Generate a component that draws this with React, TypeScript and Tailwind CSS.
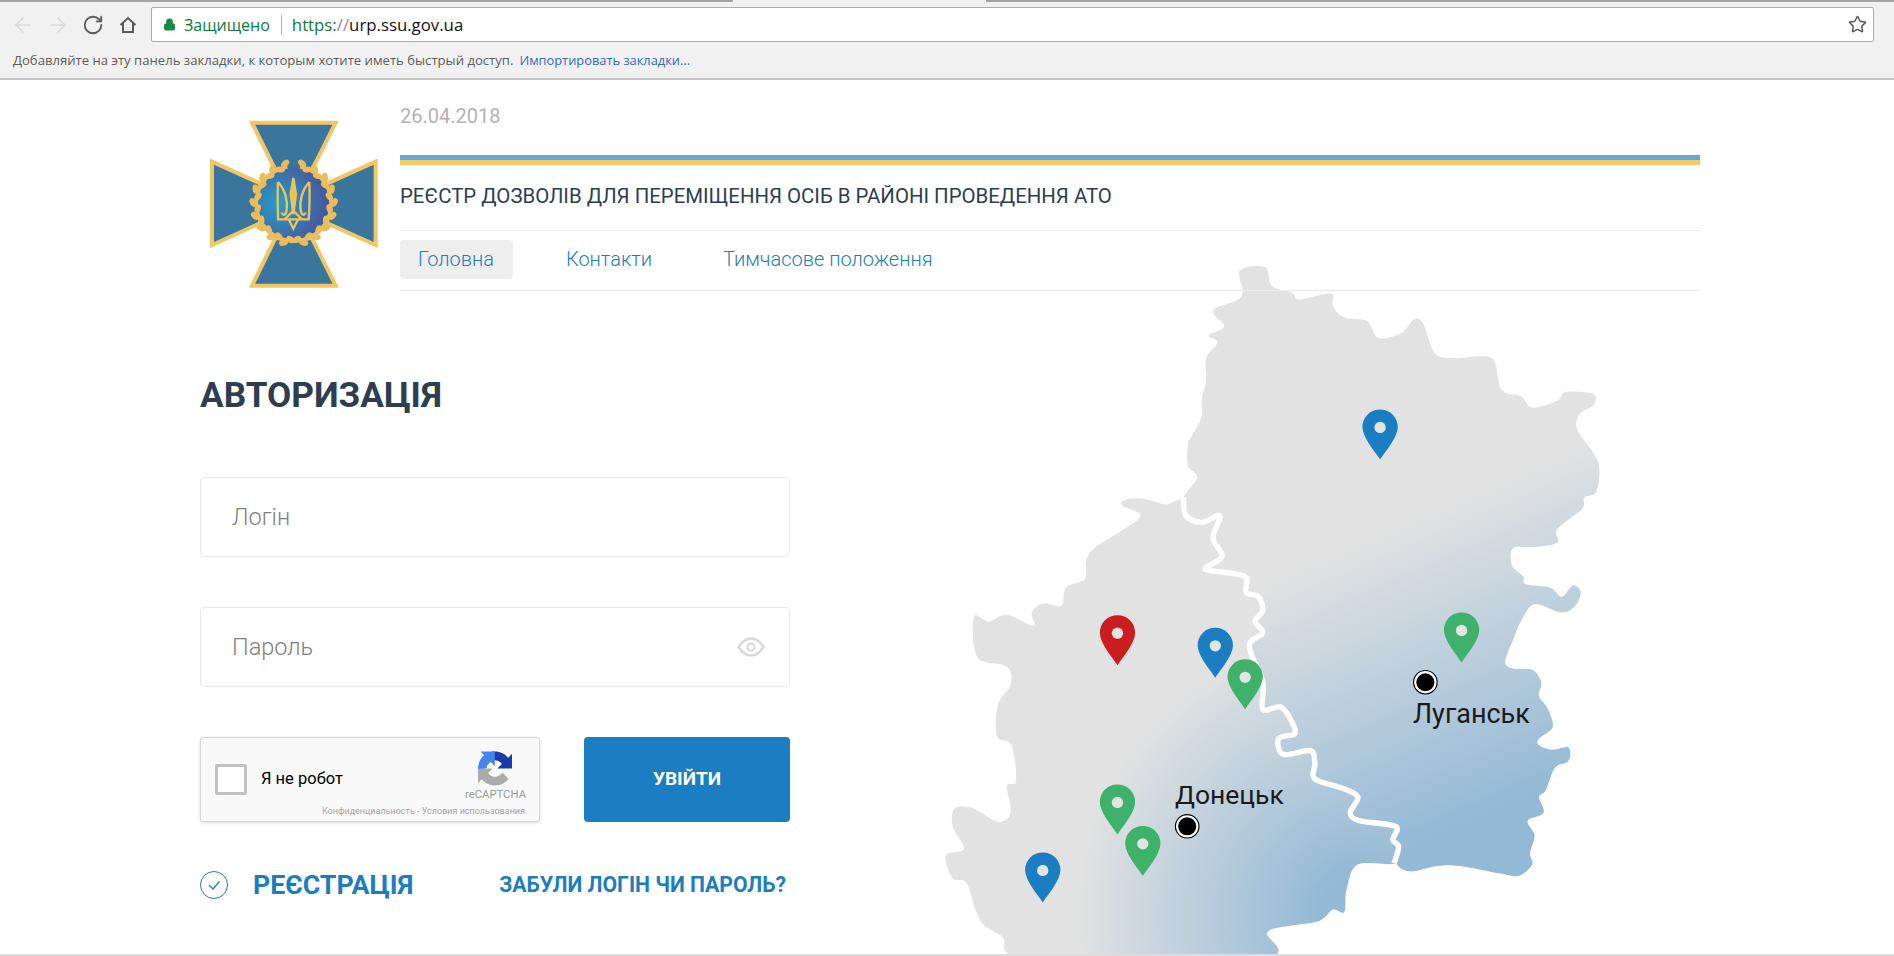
import React from 'react';
import { ArrowLeft, ArrowRight, RotateCw, Lock, Star } from 'lucide-react';

// map traced in its own 1568 unit box
const luhanskPoints =
  '685,45 740,38 755,80 800,95 815,110 885,97 890,125 915,150 965,158 990,195 1040,185 1070,153 1090,165 1115,230 1160,240 1240,240 1262,310 1305,325 1330,350 1385,335 1405,315 1465,320 1465,345 1435,365 1430,400 1475,470 1472,535 1445,550 1440,575 1385,620 1385,650 1330,660 1288,662 1285,700 1310,725 1315,742 1370,750 1395,770 1420,745 1437,760 1425,790 1395,805 1335,787 1305,825 1290,860 1270,915 1290,930 1330,932 1350,960 1345,990 1365,1020 1375,1060 1345,1085 1345,1100 1375,1110 1410,1105 1410,1135 1380,1150 1360,1200 1345,1215 1355,1250 1320,1268 1335,1300 1325,1340 1330,1365 1300,1390 1260,1385 1170,1368 1120,1368 1060,1380 1030,1362 1035,1325 1022,1310 1028,1280 950,1268 928,1250 945,1215 910,1195 850,1175 850,1140 840,1112 780,1120 770,1085 805,1075 800,1050 775,1015 735,1020 735,960 705,880 735,850 718,825 735,800 725,770 698,760 695,725 620,712 610,705 645,680 625,640 640,590 600,605 565,590 560,550 590,505 570,480 570,430 580,410 600,370 600,330 610,290 610,240 635,205 615,190 650,170 625,135 680,110 690,90';
const donetskPoints =
  '555,555 520,565 470,552 430,555 425,568 465,590 420,625 365,660 345,690 342,730 300,750 290,790 250,785 225,805 228,835 170,810 130,825 97,815 105,905 170,925 178,965 150,1010 148,1080 180,1100 190,1180 170,1190 178,1250 150,1270 95,1240 55,1240 50,1280 75,1330 35,1345 50,1395 80,1405 100,1465 120,1500 160,1525 225,1575 730,1575 745,1515 800,1500 860,1490 890,1465 915,1470 920,1420 945,1365 1030,1362 1035,1325 1022,1310 1028,1280 950,1268 928,1250 945,1215 910,1195 850,1175 850,1140 840,1112 780,1120 770,1085 805,1075 800,1050 775,1015 735,1020 735,960 705,880 735,850 718,825 735,800 725,770 698,760 695,725 620,712 610,705 645,680 625,640 640,590 600,605 565,590';
const borderPoints =
  '560,550 565,590 600,605 640,590 625,640 645,680 610,705 620,712 695,725 698,760 725,770 735,800 718,825 735,850 705,880 735,960 735,1020 775,1015 800,1050 805,1075 770,1085 780,1120 840,1112 850,1140 850,1175 910,1195 945,1215 928,1250 950,1268 1028,1280 1022,1310 1035,1325 1025,1362';

// catmull-rom through the traced points, so the outline isn't all corners
const smoothPath = (points: string, closed: boolean) => {
  const pts = points.split(' ').map((p) => p.split(',').map(Number));
  const at = (i: number) =>
    closed ? pts[(i + pts.length) % pts.length] : pts[Math.max(0, Math.min(pts.length - 1, i))];
  const end = closed ? pts.length : pts.length - 1;
  let d = `M${pts[0][0]} ${pts[0][1]}`;
  for (let i = 0; i < end; i++) {
    const [p0, p1, p2, p3] = [at(i - 1), at(i), at(i + 1), at(i + 2)];
    d += ` C${p1[0] + (p2[0] - p0[0]) / 6} ${p1[1] + (p2[1] - p0[1]) / 6} ${p2[0] - (p3[0] - p1[0]) / 6} ${p2[1] - (p3[1] - p1[1]) / 6} ${p2[0]} ${p2[1]}`;
  }
  return closed ? d + ' Z' : d;
};

const pins = [
  { x: 994, y: 465, color: '#1b7dc2' },
  { x: 414, y: 922, color: '#cb1c1f' },
  { x: 630, y: 950, color: '#1b7dc2' },
  { x: 696, y: 1020, color: '#3eb26a' },
  { x: 1174, y: 916, color: '#3eb26a' },
  { x: 414, y: 1298, color: '#3eb26a' },
  { x: 470, y: 1390, color: '#3eb26a' },
  { x: 249, y: 1449, color: '#1b7dc2' },
];

const RegionMap = () => (
  <svg viewBox="0 0 1568 1568" preserveAspectRatio="none" className="w-[710px] h-[706px] block">
    <defs>
      <linearGradient id="lug" gradientUnits="userSpaceOnUse" x1="1000" y1="620" x2="1270" y2="1240">
        <stop offset="0" stopColor="#e2e2e2" />
        <stop offset="1" stopColor="#93b9d6" />
      </linearGradient>
      <radialGradient id="don" gradientUnits="userSpaceOnUse" cx="960" cy="1480" r="640">
        <stop offset="0.15" stopColor="#93b9d6" />
        <stop offset="1" stopColor="#e2e2e2" />
      </radialGradient>
    </defs>
    <path d={smoothPath(donetskPoints, true)} fill="url(#don)" />
    <path d={smoothPath(luhanskPoints, true)} fill="url(#lug)" />
    <path d={smoothPath(borderPoints, false)} fill="none" stroke="#fff" strokeWidth="12" strokeLinejoin="round" />
    {pins.map((p, i) => (
      <g key={i} transform={`translate(${p.x} ${p.y})`}>
        <path d="M0 0 C-15 -22 -39 -50 -39 -72 A39 39 0 0 1 39 -72 C39 -50 15 -22 0 0Z" fill={p.color} />
        <circle cx="0" cy="-71" r="12.5" fill="#e4e4e4" />
      </g>
    ))}
    <circle cx="1094" cy="960" r="26" fill="#fff" stroke="#000" strokeWidth="2.5" />
    <circle cx="1094" cy="960" r="20" fill="#000" />
    <circle cx="568" cy="1280" r="26" fill="#fff" stroke="#000" strokeWidth="2.5" />
    <circle cx="568" cy="1280" r="20" fill="#000" />
  </svg>
);

const SsuEmblem = () => (
  <svg viewBox="60 90 504 504" className="w-[168px] h-[168px] shrink-0">
    <defs>
      <radialGradient id="emb" cx="0.3" cy="0.5" r="0.8">
        <stop offset="0" stopColor="#279fc9" />
        <stop offset="1" stopColor="#4f4792" />
      </radialGradient>
    </defs>
    <g fill="#3a759d" stroke="#f3c664" strokeWidth="12">
      <path d="M186 98 L437 98 L366 240 L256 240 Z" />
      <path d="M186 587 L437 587 L366 445 L256 445 Z" />
      <path d="M66 215 L66 465 L210 400 L210 280 Z" />
      <path d="M557 215 L557 465 L412 400 L412 280 Z" />
    </g>
    <circle cx="311" cy="340" r="108" fill="url(#emb)" />
    <path d="M292 231 A112 112 0 1 0 330 231" fill="none" stroke="#e9bd5c" strokeWidth="10" />
    {Array.from({ length: 36 }).map((_, i) => {
      // leaves run from the top round to the bottom on each side
      const side = i % 2 === 0 ? 1 : -1;
      const deg = 12 + Math.floor(i / 2) * 9.6;
      const a = (deg * Math.PI) / 180;
      const r = 113 + (i % 4 < 2 ? 9 : -4);
      const x = 311 + side * r * Math.sin(a);
      const y = 340 - r * Math.cos(a);
      const rot = side * (deg + (i % 4 < 2 ? 30 : -25));
      return <ellipse key={i} cx={x} cy={y} rx="14" ry="9" fill="#e9bd5c" transform={`rotate(${rot} ${x} ${y})`} />;
    })}
    <g fill="none" stroke="#efc35a" strokeWidth="7">
      <path d="M310 264 L302 312 L310 372 L318 312 Z" fill="#efc35a" />
      <path d="M264 276 C262 320 264 360 264 388 L356 388 C358 360 360 320 358 276" />
      <path d="M264 276 C286 300 294 335 290 360 C288 376 279 378 275 368" />
      <path d="M358 276 C336 300 328 335 332 360 C334 376 343 378 347 368" />
      <path d="M284 388 L310 362 L336 388 M296 388 L310 416 L324 388" />
    </g>
  </svg>
);

const RecaptchaLogo = () => (
  <svg viewBox="0 0 64 64" className="w-[34px] h-[35px]">
    <path d="M64 31.955l-.033-1.37V4.687l-7.16 7.16C50.948 4.674 42.033.093 32.05.093c-10.4 0-19.622 4.96-25.458 12.64l11.736 11.86c1.15-2.127 2.784-3.955 4.75-5.33 2.05-1.6 4.953-2.91 8.97-2.91.486 0 .86.057 1.135.163 4.976.393 9.288 3.14 11.828 7.124l-8.307 8.307c10.522-.04 22.4-.066 27.295.002" fill="#1c3aa9" />
    <path d="M31.862.094l-1.37.033H4.594l7.16 7.16C4.58 13.147 0 22.06 0 32.045c0 1.2.066 2.4.2 3.5L16.2 31c.393-4.976 3.14-9.288 7.124-11.828l8.307 8.307c-.04-10.522-.066-22.4.002-27.295" fill="#4285f4" />
    <path d="M.001 32.045l.033 1.37v25.898l7.16-7.16c5.86 7.173 14.774 11.754 24.76 11.754 10.4 0 19.622-4.96 25.458-12.64l-11.736-11.86c-1.15 2.127-2.784 3.955-4.75 5.33-2.05 1.6-4.953 2.91-8.97 2.91-.486 0-.86-.057-1.135-.163-4.976-.393-9.288-3.14-11.828-7.124l8.307-8.307C21.778 31.983 9.9 32.01 5.006 31.942" fill="#ababab" />
  </svg>
);

const BrowserBar = () => (
  <div className="h-[80px] bg-[#f1f1f1] border-b-2 border-[#c4c4c4] shrink-0 flex flex-col font-['Open_Sans',sans-serif]">
    <div className="flex h-[2px] shrink-0">
      <div className="w-[733px] bg-[#a3a3a3]" />
      <div className="w-[253px]" />
      <div className="flex-1 bg-[#a3a3a3]" />
    </div>
    <div className="flex items-center h-[35px] mt-[5px] pl-[11px] pr-[20px]">
      <ArrowLeft className="w-[24px] h-[24px] text-[#d9d9d9] mr-[11px]" strokeWidth={1.5} />
      <ArrowRight className="w-[24px] h-[24px] text-[#d9d9d9] mr-[12px]" strokeWidth={1.5} />
      <RotateCw className="w-[22px] h-[22px] text-[#5a5a5a] mr-[15px]" strokeWidth={2} />
      <svg viewBox="0 0 18 18" className="w-[18px] h-[18px] mr-[14px]" fill="none" stroke="#5a5a5a" strokeWidth="2">
        <path d="M1.5 9 L9 2 L16.5 9 M4 7.5 L4 16 L14 16 L14 7.5" />
      </svg>
      <div className="flex-1 h-[35px] bg-white border border-[#ababab] rounded-[2px] flex items-center pl-[11px] pr-[6px] text-[16px]">
        <Lock className="w-[13px] h-[15px] text-[#178a3e] fill-[#178a3e]" />
        <span className="ml-[8px] text-[#0b7a3b]">Защищено</span>
        <span className="w-px h-[20px] bg-[#b5b5b5] ml-[11px] mr-[10px]" />
        <span className="text-[16.8px] text-[#0b7a3b]">https:</span>
        <span className="text-[16.8px] text-[#8a8a8a]">//</span>
        <span className="text-[16.8px] text-[#111]">urp.ssu.gov.ua</span>
        <Star className="ml-auto w-[19px] h-[19px] text-[#555]" strokeWidth={1.8} />
      </div>
    </div>
    <div className="flex items-center pl-[13px] mt-[3px] text-[13px] leading-[16px] h-[30px]">
      <span className="text-[13.12px] text-[#5c5c5c]">Добавляйте на эту панель закладки, к которым хотите иметь быстрый доступ.</span>
      <span className="text-[12.85px] text-[#3367d6] ml-[6px]">Импортировать закладки...</span>
    </div>
  </div>
);

const SiteHeader = () => (
  <div className="flex">
    <div className="pl-[10px] pt-[39px] w-[200px] shrink-0">
      <SsuEmblem />
    </div>
    <div className="w-[1300px] pt-[23px]">
      <p className="text-[20px] leading-[24px] text-[#b3b3b3]">26.04.2018</p>
      <div className="mt-[27px] h-[5px] bg-[#66a9d9]" />
      <div className="h-[5px] bg-[#f5c964]" />
      <h2 className="mt-[19px] mb-[22px] text-[20.4px] leading-[24px] text-[#2c3e50]">
        РЕЄСТР ДОЗВОЛІВ ДЛЯ ПЕРЕМІЩЕННЯ ОСІБ В РАЙОНІ ПРОВЕДЕННЯ АТО
      </h2>
      <nav className="border-y border-[#ebebeb] pt-[8px] pb-[11px] flex items-center h-[61px] font-light text-[20px] text-[#1b7dc2]">
        <a className="bg-[#eeeeee] rounded-[4px] h-[39px] pl-[18px] pr-[19px] flex items-center">Головна</a>
        <a className="ml-[53px]">Контакти</a>
        <a className="ml-[71px]">Тимчасове положення</a>
      </nav>
    </div>
  </div>
);

const LoginForm = () => (
  <div className="w-[590px]">
    <h1 className="mt-[82px] text-[35.2px] leading-[44px] font-bold text-[#2c3e50]">АВТОРИЗАЦІЯ</h1>
    <div className="mt-[60px] h-[80px] pt-[2px] border border-[#e8e8e8] rounded-[4px] flex items-center pl-[31px] font-light text-[23.5px] text-[#808080]">
      Логін
    </div>
    <div className="mt-[50px] h-[80px] pt-[2px] border border-[#e8e8e8] rounded-[4px] flex items-center justify-between pl-[31px] pr-[24px] font-light text-[23.5px] text-[#808080]">
      Пароль
      <svg viewBox="0 0 28 20" className="w-[28px] h-[20px] -mt-[2px]" fill="none" stroke="#d9d9d9" strokeWidth="2.5">
        <path d="M1.5 10 C6 3 10 1.5 14 1.5 C18 1.5 22 3 26.5 10 C22 17 18 18.5 14 18.5 C10 18.5 6 17 1.5 10Z" />
        <circle cx="14" cy="10" r="3.5" strokeWidth="2" />
      </svg>
    </div>
    <div className="mt-[50px] flex justify-between">
      <div className="w-[340px] h-[85px] bg-[#f9f9f9] border border-[#d6d6d6] rounded-[3px] shadow-[0_1px_3px_rgba(0,0,0,0.15)] flex flex-col">
        <div className="flex justify-between h-[64px]">
          <div className="flex items-center pl-[14px] pt-[14px] h-[54px] box-content">
            <div className="w-[32px] h-[31px] shrink-0 bg-white border-[3px] border-[#c1c1c1] rounded-[2px]" />
            <span className="ml-[14px] text-[16.5px] text-black whitespace-nowrap">Я не робот</span>
          </div>
          <div className="flex flex-col items-center pr-[13px] pt-[13px]">
            <RecaptchaLogo />
            <span className="mt-[2px] text-[11.3px] leading-[14px] text-[#9b9b9b]">reCAPTCHA</span>
          </div>
        </div>
        <span className="mt-[2px] pr-[14px] text-right text-[9px] leading-[14px] text-[#a5a5a5] whitespace-nowrap">
          Конфиденциальность - Условия использования
        </span>
      </div>
      <button className="w-[206px] h-[85px] bg-[#1b7dc2] rounded-[4px] text-white font-bold text-[19px]">УВІЙТИ</button>
    </div>
    <div className="mt-[43px] h-[40px] flex items-center justify-between pr-[4px]">
      <div className="flex items-center">
        <svg viewBox="0 0 28 28" className="w-[28px] h-[28px]" fill="none" stroke="#1b7dc2">
          <circle cx="14" cy="14" r="13.5" />
          <path d="M9 14 L13 18 L19.5 10.5" strokeWidth="1.2" />
        </svg>
        <span className="ml-[25px] font-bold text-[26.7px] text-[#1b7dc2]">РЕЄСТРАЦІЯ</span>
      </div>
      <a className="font-bold text-[21.2px] text-[#1b7dc2]">ЗАБУЛИ ЛОГІН ЧИ ПАРОЛЬ?</a>
    </div>
  </div>
);

export default function App() {
  return (
    <div className="relative w-[1894px] h-[956px] overflow-hidden bg-white flex flex-col font-['Roboto',sans-serif]">
      <BrowserBar />
      <div className="relative flex-1 pt-[1px] pl-[200px] border-b-2 border-[#dcdcdc] overflow-hidden">
        {/* map sits behind the form, its place on the page is free */}
        <div className="absolute left-[930px] top-[170px]">
          <RegionMap />
          <span className="absolute left-[245px] top-[527px] text-[26.5px] leading-[36px] text-[#1a1a1a]">Донецьк</span>
          <span className="absolute left-[483px] top-[446px] text-[27px] leading-[36px] text-[#1a1a1a]">Луганськ</span>
        </div>
        <div className="relative">
          <SiteHeader />
          <LoginForm />
        </div>
      </div>
    </div>
  );
}
